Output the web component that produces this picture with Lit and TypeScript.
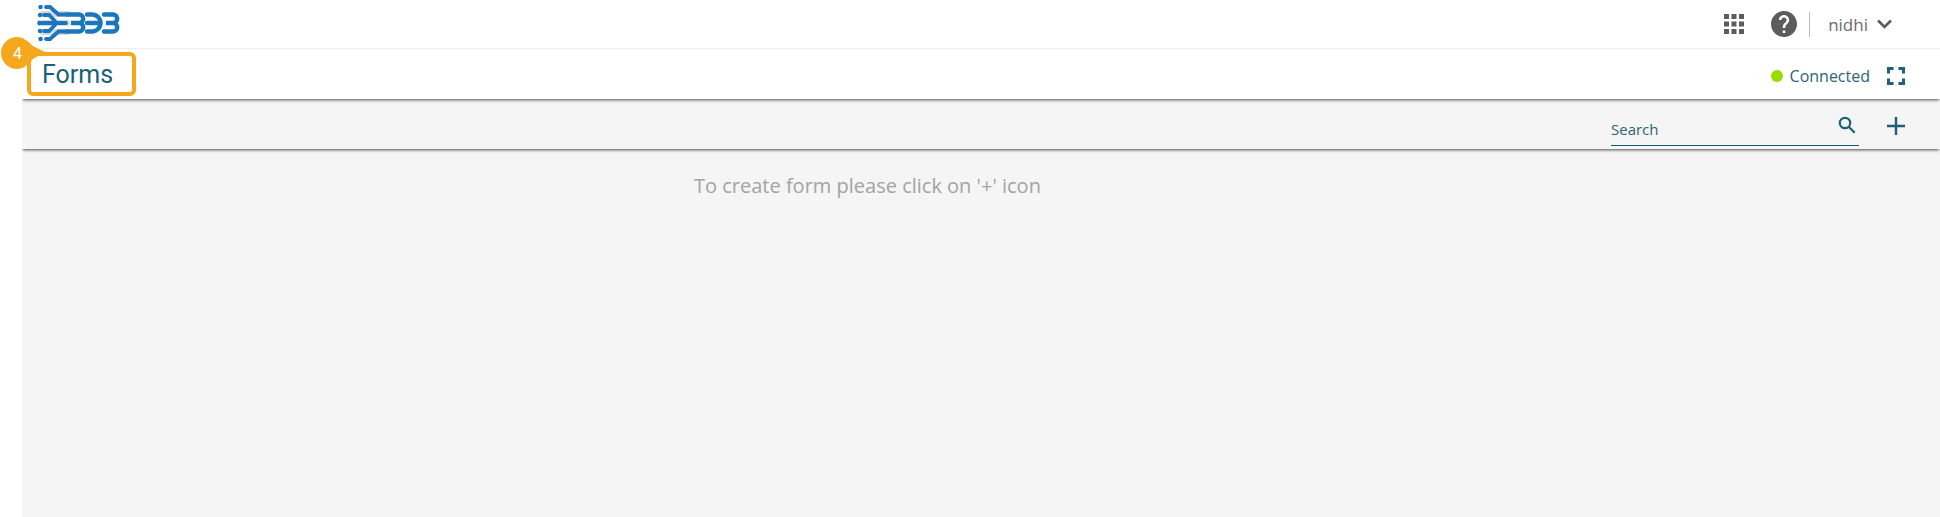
import { LitElement, html, css } from "lit";
import { customElement } from "lit/decorators.js";

@customElement("app-root")
export class AppRoot extends LitElement {
  static styles = css`
    :host {
      display: block;
      width: 100%;
      height: 517px;
      background: #fff;
      font-family: "Open Sans", sans-serif;
      overflow: hidden;
      position: relative;
    }
    .topbar {
      height: 48px;
      display: flex;
      align-items: center;
      justify-content: space-between;
      padding: 0 48px 0 37px;
      border-bottom: 1px solid #eee;
    }
    .logo {
      display: block;
    }
    .top-right {
      display: flex;
      align-items: center;
    }
    .apps {
      display: block;
      margin-right: 27px;
    }
    .help {
      display: block;
      margin-right: 12px;
    }
    .sep {
      width: 1px;
      height: 25px;
      background: #bbb;
      margin-right: 18px;
    }
    .user {
      font-size: 17px;
      color: #6b6b6b;
      margin-right: 9px;
    }
    .main {
      margin-left: 22px;
      height: 468px;
      display: flex;
      flex-direction: column;
    }
    .titlebar {
      height: 50px;
      flex: none;
      display: flex;
      align-items: center;
      justify-content: space-between;
      padding: 0 35px 0 20px;
      background: #fff;
      box-shadow: 0 2px 3px -1px rgba(0, 0, 0, 0.7);
      clip-path: inset(0 0 -6px 0);
      position: relative;
      z-index: 2;
    }
    .title {
      font-family: Roboto, sans-serif;
      font-size: 25px;
      color: #1a5f78;
    }
    .status {
      display: flex;
      align-items: center;
      font-size: 16px;
      color: #2c6478;
      padding-top: 3px;
    }
    .dot {
      width: 12px;
      height: 12px;
      border-radius: 50%;
      background: #96dc00;
      margin-right: 7px;
    }
    .expand {
      display: block;
      margin-left: 17px;
    }
    .toolbar {
      height: 50px;
      flex: none;
      display: flex;
      align-items: center;
      justify-content: flex-end;
      padding-right: 35px;
      background: #f5f5f5;
      box-shadow: 0 2px 3px -1px rgba(0, 0, 0, 0.7);
      clip-path: inset(0 0 -6px 0);
      position: relative;
      z-index: 1;
    }
    .search {
      width: 248px;
      height: 36px;
      box-sizing: border-box;
      border-bottom: 1px solid #12566b;
      display: flex;
      align-items: center;
      justify-content: space-between;
      margin: 8px 28px 0 0;
      padding: 2px 3px 0 0;
      font-size: 15px;
      color: #2c6478;
    }
    .search-icon {
      display: block;
      margin-top: -8px;
    }
    .plus {
      display: block;
      margin-top: 4px;
    }
    .content {
      flex: 1;
      background: #f5f5f5;
    }
    .hint {
      margin: 23px 0 0 672px;
      font-size: 20px;
      line-height: 27px;
      color: #a3a3a3;
    }
    .highlight {
      position: absolute;
      left: 27px;
      top: 52px;
      width: 109px;
      height: 44px;
      box-sizing: border-box;
      border: 4px solid #f5a81c;
      border-radius: 6px;
      z-index: 3;
    }
    .badge {
      position: absolute;
      left: 0;
      top: 37px;
      width: 46px;
      height: 32px;
      z-index: 4;
    }
    .badge svg {
      display: block;
    }
    .badge span {
      position: absolute;
      left: 2px;
      top: 1px;
      width: 31px;
      line-height: 31px;
      text-align: center;
      color: #fff;
      font-family: Roboto, sans-serif;
      font-size: 16px;
    }
  `;

  render() {
    return html`
      <div class="topbar">
        <svg class="logo" width="83" height="38" viewBox="36 5 83 38" fill="none" stroke="#1a76bd" stroke-linecap="round" stroke-width="4.400">
          <path d="M42 14h24M38 23h28M42 32h24" stroke="#d5d8de" stroke-width="6"/>
          <path d="M45 7h4l8.500 7.500h8M43 15h5l6 6M41 23h24M43 31h5l6-6M45 39h4l8.500-7.500h8" stroke-width="3.800"/>
          <path d="M39.500 7h.1M39 15h.1M38.500 23h.1M39 31h.1M39.500 39h.1" stroke-width="4.400"/>
          <path d="M66 14.500h12a4.200 4.200 0 0 1 0 8.500h-8h8a4.200 4.200 0 0 1 0 8.500H66"/>
          <path d="M86 14.500h5a8.500 8.500 0 0 1 0 17h-5M86 23h10"/>
          <path d="M103 14.500h9a4.200 4.200 0 0 1 0 8.500h-7h7a4.200 4.200 0 0 1 0 8.500h-9"/>
        </svg>
        <div class="top-right">
          <svg class="apps" width="20" height="20" viewBox="0 0 20 20" fill="#5c5c5c">
            <rect x="0" y="0" width="5" height="5"/><rect x="7.500" y="0" width="5" height="5"/><rect x="15" y="0" width="5" height="5"/>
            <rect x="0" y="7.500" width="5" height="5"/><rect x="7.500" y="7.500" width="5" height="5"/><rect x="15" y="7.500" width="5" height="5"/>
            <rect x="0" y="15" width="5" height="5"/><rect x="7.500" y="15" width="5" height="5"/><rect x="15" y="15" width="5" height="5"/>
          </svg>
          <svg class="help" width="26" height="26" viewBox="2 2 20 20">
            <path fill="#5c5c5c" d="M12 2C6.480 2 2 6.480 2 12s4.480 10 10 10 10-4.480 10-10S17.520 2 12 2zm1 17h-2v-2h2v2zm2.070-7.750l-.9.920C13.450 12.900 13 13.500 13 15h-2v-.5c0-1.100.45-2.100 1.170-2.830l1.240-1.260c.37-.36.59-.86.59-1.410 0-1.100-.9-2-2-2s-2 .9-2 2H8c0-2.210 1.790-4 4-4s4 1.790 4 4c0 .88-.36 1.680-.93 2.250z"/>
          </svg>
          <div class="sep"></div>
          <span class="user">nidhi</span>
          <svg width="15" height="10" viewBox="0 0 15 10" fill="none" stroke="#5c5c5c" stroke-width="2.600"><path d="M1 1.500l6.500 6.500L14 1.500"/></svg>
        </div>
      </div>
      <div class="main">
        <div class="titlebar">
          <span class="title">Forms</span>
          <div class="status">
            <span class="dot"></span>
            <span>Connected</span>
            <svg class="expand" width="18" height="18" viewBox="0 0 18 18" fill="none" stroke="#1b6078" stroke-width="3">
              <path d="M1.500 6.500V1.500H6.500M11.500 1.500h5V6.500M16.500 11.500v5H11.500M6.500 16.500H1.500V11.500"/>
            </svg>
          </div>
        </div>
        <div class="toolbar">
          <div class="search">
            <span>Search</span>
            <svg class="search-icon" width="18" height="18" viewBox="0 0 18 18" fill="none" stroke="#1b6078" stroke-width="2.200">
              <circle cx="7" cy="7" r="5.200"/><path d="M10.700 10.700l6 6"/>
            </svg>
          </div>
          <svg class="plus" width="18" height="18" viewBox="0 0 18 18" stroke="#1b6078" stroke-width="2.400"><path d="M9 0v18M0 9h18"/></svg>
        </div>
        <div class="content"><div class="hint">To create form please click on '+' icon</div></div>
      </div>
      <div class="highlight"></div>
      <div class="badge">
        <svg width="46" height="32" viewBox="0 0 46 32"><path fill="#f5a81c" d="M17 0C23 0 28 4 33 9l12 6-12 7C28 28 23 32 17 32a16 16 0 0 1 0-32z"/></svg>
        <span>4</span>
      </div>
    `;
  }
}
